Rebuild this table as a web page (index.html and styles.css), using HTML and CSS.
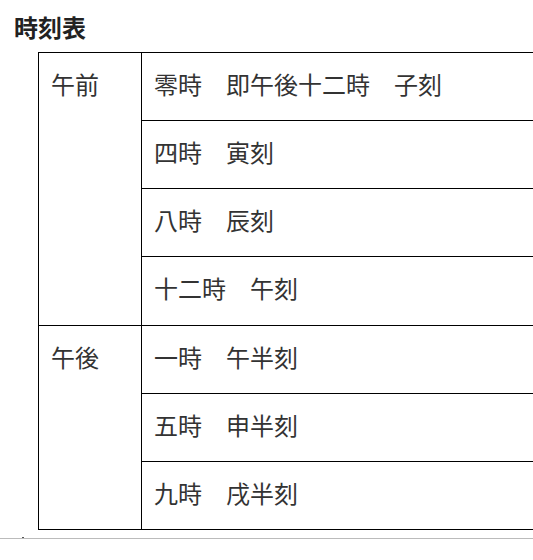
FILE: index.html
```html
<!DOCTYPE html>
<html lang="ja">
<head>
<meta charset="utf-8">
<title>時刻表</title>
<link rel="stylesheet" href="styles.css">
</head>
<body>
<div class="page">
  <h1 class="title">時刻表</h1>
  <div class="table-wrap">
    <table class="timetable">
      <tr>
        <td class="period" rowspan="4">午前</td>
        <td class="time">零時　即午後十二時　子刻</td>
      </tr>
      <tr><td class="time">四時　寅刻</td></tr>
      <tr><td class="time">八時　辰刻</td></tr>
      <tr><td class="time">十二時　午刻</td></tr>
      <tr>
        <td class="period" rowspan="3">午後</td>
        <td class="time">一時　午半刻</td>
      </tr>
      <tr><td class="time">五時　申半刻</td></tr>
      <tr><td class="time">九時　戌半刻</td></tr>
    </table>
  </div>
  <div class="footer">
    <span class="dot"></span>
  </div>
</div>
</body>
</html>
```
FILE: styles.css
```css
html, body {
  margin: 0;
  padding: 0;
  background: #fff;
  overflow: hidden;
}

.page {
  font-family: "Noto Sans CJK JP", "Noto Sans", sans-serif;
  color: #333;
  width: 533px;
  overflow: hidden;
}

.title {
  margin: 0;
  padding: 15px 0 0 14px;
  font-size: 24px;
  line-height: 24px;
  font-weight: 700;
  color: #222;
  height: 37px;
}

.table-wrap {
  padding-left: 38px;
  overflow: hidden;
}

.timetable {
  border-collapse: collapse;
  width: 600px;
}

.timetable td {
  border: 1px solid #000;
  padding: 19px 12px 24.15px;
  font-size: 24px;
  line-height: 24px;
  font-weight: 400;
  vertical-align: top;
  white-space: nowrap;
}

.timetable .period {
  width: 78px;
}

.footer {
  position: relative;
  margin-top: 8px;
  border-top: 1px solid #bbb;
  height: 20px;
}

.dot {
  position: absolute;
  left: 22px;
  top: -2px;
  width: 2px;
  height: 1px;
  background: #555;
}
```
